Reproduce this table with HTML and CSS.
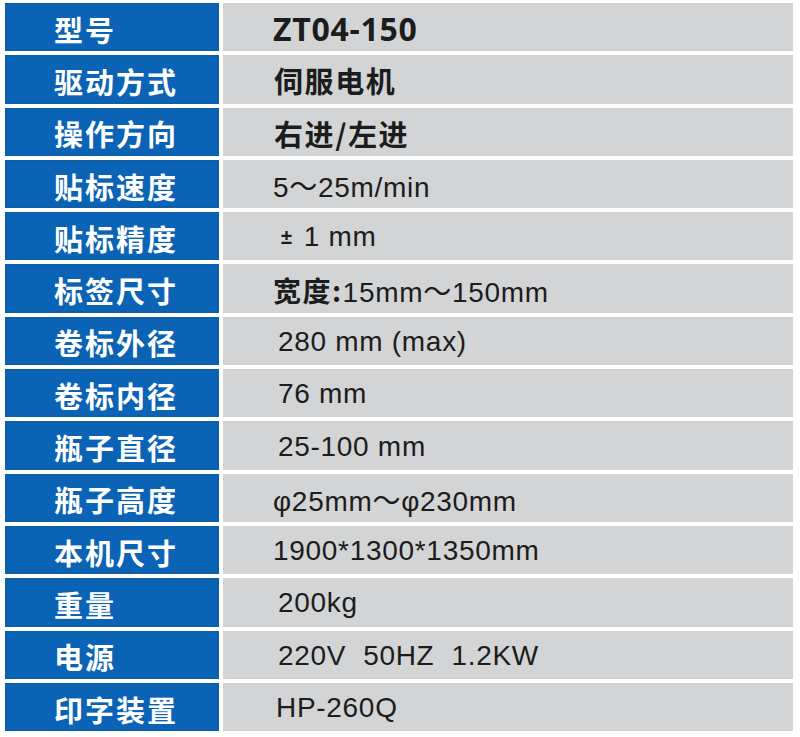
FILE: index.html
```html
<!DOCTYPE html>
<html lang="zh">
<head>
<meta charset="utf-8">
<link rel="stylesheet" href="styles.css">
</head>
<body>
<div class="spec">
  <div class="k">型号</div><div class="v model">ZT04-150</div>
  <div class="k">驱动方式</div><div class="v cjk">伺服电机</div>
  <div class="k">操作方向</div><div class="v cjk">右进/左进</div>
  <div class="k">贴标速度</div><div class="v">5～25m/min</div>
  <div class="k">贴标精度</div><div class="v pm"><span class="pmg">±</span>1 mm</div>
  <div class="k">标签尺寸</div><div class="v"><span class="cjkb">宽度:</span>15mm～150mm</div>
  <div class="k">卷标外径</div><div class="v s5">280 mm (max)</div>
  <div class="k">卷标内径</div><div class="v s5">76 mm</div>
  <div class="k">瓶子直径</div><div class="v s5">25-100 mm</div>
  <div class="k">瓶子高度</div><div class="v">φ25mm～φ230mm</div>
  <div class="k">本机尺寸</div><div class="v">1900*1300*1350mm</div>
  <div class="k">重量</div><div class="v s5">200kg</div>
  <div class="k">电源</div><div class="v s5">220V&nbsp; 50HZ&nbsp; 1.2KW</div>
  <div class="k">印字装置</div><div class="v s3">HP-260Q</div>
</div>
</body>
</html>
```
FILE: styles.css
```css
html, body {
  margin: 0;
  padding: 0;
  background: #ffffff;
}
.spec {
  display: grid;
  grid-template-columns: 214px 570px;
  grid-auto-rows: 48.3px;
  column-gap: 4px;
  row-gap: 4px;
  padding: 3px 0 0 5px;
}
.k {
  background: #0b63b5;
  color: #ffffff;
  font-family: "Noto Sans CJK SC", sans-serif;
  font-weight: 700;
  font-size: 29px;
  letter-spacing: 2px;
  display: flex;
  align-items: center;
  padding-left: 49px;
  padding-top: 3px;
  box-sizing: border-box;
  box-shadow: inset 0 0 0 2px #0f5fa8;
}
.v {
  background: #d3d4d6;
  color: #1c1c1c;
  font-family: "Liberation Sans", "Noto Sans CJK SC", sans-serif;
  font-size: 28px;
  letter-spacing: 0.7px;
  display: flex;
  align-items: center;
  padding-left: 50px;
  padding-top: 2px;
  box-sizing: border-box;
}
.v.s5 { padding-left: 55px; }
.v.s3 { padding-left: 53px; }
.v.pm { padding-left: 58px; }
.pmg {
  font-weight: 700;
  font-size: 20px;
  margin-right: 11px;
}
.v.model {
  font-family: "Open Sans", sans-serif;
  font-weight: 700;
  font-size: 32px;
  letter-spacing: 0.7px;
}
.v.cjk {
  font-family: "Noto Sans CJK SC", sans-serif;
  font-weight: 700;
  font-size: 29px;
  letter-spacing: 1.6px;
  padding-left: 51px;
}
.cjkb {
  font-family: "Noto Sans CJK SC", sans-serif;
  font-weight: 700;
  letter-spacing: 1.5px;
}
```
